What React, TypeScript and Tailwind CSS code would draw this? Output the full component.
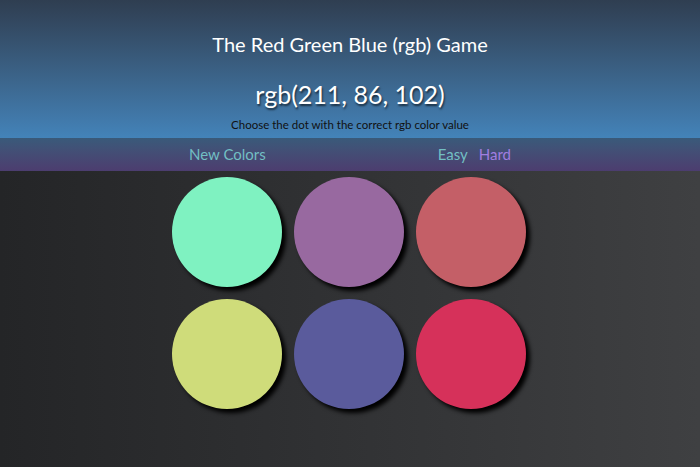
import React from 'react';

const DOTS = ['#7ff2c1', '#9869a0', '#c45f67', '#cfdc7a', '#5a5b9c', '#d6315a'];

export default function App() {
  return (
    <div className="flex min-h-[467px] w-full flex-col font-['Lato',sans-serif]">
      {/* header */}
      <header className="flex h-[138px] flex-col items-center bg-gradient-to-b from-[#2f3e51] to-[#4383b9] pt-[30px] text-white">
        <h1 className="text-[20px] leading-[28px]">The Red Green Blue (rgb) Game</h1>
        <div className="mt-[19px] text-[25px] leading-[34px] [text-shadow:1px_2px_2px_rgba(0,0,0,0.6)]">
          rgb(211, 86, 102)
        </div>
        <p className="mt-[6px] text-[11.5px] leading-[16px] text-[#111]">Choose the dot with the correct rgb color value</p>
      </header>

      {/* nav */}
      <nav className="flex h-[33px] items-center justify-center bg-gradient-to-b from-[#395a7a] to-[#4c3d6f]">
        <div className="flex w-[322px] items-center justify-between text-[15px]">
          <button className="text-[#72bfc3]">New Colors</button>
          <div className="flex gap-[11px]">
            <button className="text-[#72bfc3]">Easy</button>
            <button className="text-[#a07ee0]">Hard</button>
          </div>
        </div>
      </nav>

      {/* board */}
      <main className="flex flex-1 justify-center bg-gradient-to-r from-[#242527] to-[#3f4042] pt-[6px]">
        <div className="ml-[-2px] grid h-fit grid-cols-3 gap-[12px]">
          {DOTS.map((c) => (
            <div
              key={c}
              className="h-[110px] w-[110px] rounded-full shadow-[4px_4px_4px_#000]"
              style={{ backgroundColor: c }}
            />
          ))}
        </div>
      </main>
    </div>
  );
}
